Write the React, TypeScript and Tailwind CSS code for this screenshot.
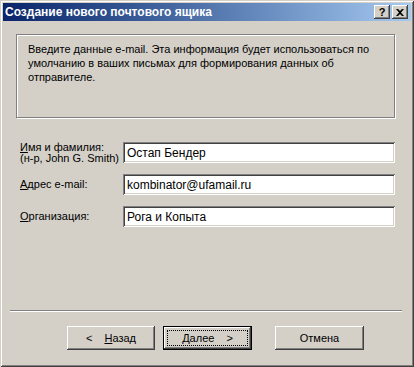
import React from "react"

const raised =
  "shadow-[inset_-1px_-1px_#404040,inset_1px_1px_#ffffff,inset_-2px_-2px_#808080,inset_2px_2px_#d4d0c8]"

const Field: React.FC<{ label: React.ReactNode; value: string }> = ({ label, value }) => (
  <div className="flex items-center h-[21px]">
    <div className="w-[107px] pl-[4px] text-[11px] leading-[11px]">{label}</div>
    <div className="flex-1 h-[21px] bg-white flex items-center pl-[4px] text-[12px] shadow-[inset_1px_1px_#808080,inset_-1px_-1px_#ffffff,inset_2px_2px_#404040,inset_-2px_-2px_#d4d0c8]">
      {value}
    </div>
  </div>
)

export default function App() {
  return (
    <div className="w-[414px] h-[367px] bg-[#d4d0c8] p-[3px] flex flex-col text-black font-['Liberation_Sans',Arial,sans-serif] shadow-[inset_1px_1px_#d4d0c8,inset_-1px_-1px_#404040,inset_2px_2px_#ffffff,inset_-2px_-2px_#808080]">
      {/* title bar */}
      <div className="h-[18px] flex items-center bg-linear-to-r from-[#0a246a] to-[#a6caf0] pl-[2px] pr-[3px]">
        <span className="text-white font-bold text-[12px] flex-1">Создание нового почтового ящика</span>
        <div className={`w-[16px] h-[14px] bg-[#d4d0c8] flex items-center justify-center text-[11px] font-bold leading-none ${raised}`}>
          ?
        </div>
        <div className={`ml-[2px] w-[16px] h-[14px] bg-[#d4d0c8] flex items-center justify-center ${raised}`}>
          <svg width="8" height="7" viewBox="0 0 8 7">
            <path d="M0 0h2l2 2 2-2h2L5 3.5 8 7H6L4 5 2 7H0l3-3.5z" fill="#000" />
          </svg>
        </div>
      </div>

      {/* body */}
      <div className="flex-1 flex flex-col">
        <div className="mt-[13px] ml-[13px] mr-[16px] h-[84px] border border-[#808080] shadow-[inset_1px_1px_#ffffff,1px_1px_#ffffff] pt-[7px] pl-[11px] pr-[8px] text-[11px] leading-[14px]">
          Введите данные e-mail. Эта информация будет использоваться по умолчанию в ваших письмах для формирования
          данных об отправителе.
        </div>

        <div className="mt-[24px] ml-[13px] mr-[16px] flex flex-col gap-[11px]">
          <Field
            label={
              <>
                <span className="underline">И</span>мя и фамилия:
                <br />
                (н-р, John G. Smith)
              </>
            }
            value="Остап Бендер"
          />
          <Field
            label={
              <>
                <span className="underline">А</span>дрес e-mail:
              </>
            }
            value="kombinator@ufamail.ru"
          />
          <Field
            label={
              <>
                <span className="underline">О</span>рганизация:
              </>
            }
            value="Рога и Копыта"
          />
        </div>

        <div className="mt-auto ml-[7px] mr-[9px] h-[2px] border-t border-t-[#808080] border-b border-b-white" />

        <div className="mt-[14px] mb-[14px] ml-[64px] flex text-[11px]">
          <button className={`w-[88px] h-[24px] bg-[#d4d0c8] flex items-center justify-center gap-[12px] ${raised}`}>
            <span>&lt;</span>
            <span>
              <span className="underline">Н</span>азад
            </span>
          </button>
          <button className="ml-[8px] w-[89px] h-[24px] bg-[#d4d0c8] border border-black p-[3px] shadow-[inset_-1px_-1px_#404040,inset_1px_1px_#ffffff,inset_-2px_-2px_#808080]">
            <div className="w-full h-full border border-dotted border-black flex items-center justify-center gap-[12px]">
              <span>
                <span className="underline">Д</span>алее
              </span>
              <span>&gt;</span>
            </div>
          </button>
          <button className={`ml-[23px] w-[89px] h-[24px] bg-[#d4d0c8] flex items-center justify-center ${raised}`}>
            Отмена
          </button>
        </div>
      </div>
    </div>
  )
}
